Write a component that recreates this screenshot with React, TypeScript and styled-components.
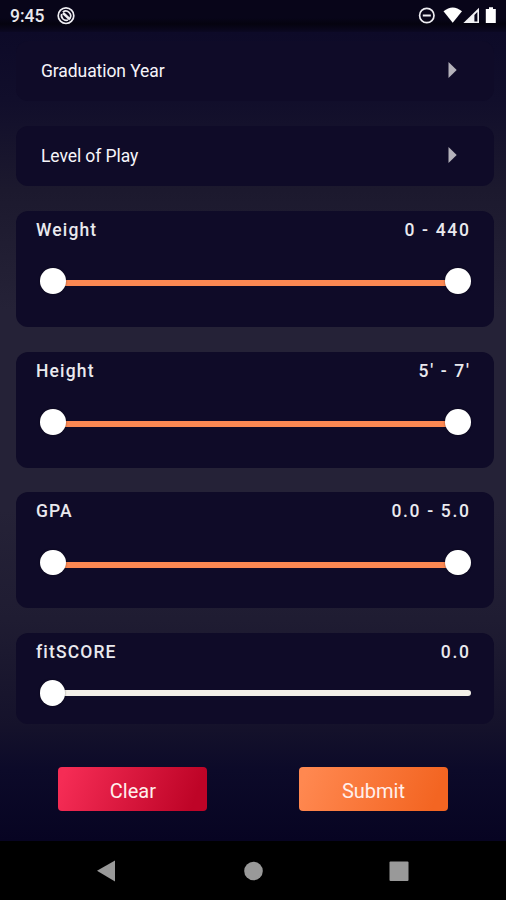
import React from "react";
import styled, { createGlobalStyle } from "styled-components";

const GlobalStyle = createGlobalStyle`
  * { box-sizing: border-box; }
  body { margin: 0; background: #000; font-family: Roboto, "Liberation Sans", sans-serif; }
`;

const Screen = styled.div`
  width: 506px;
  height: 900px;
  display: flex;
  flex-direction: column;
  overflow: hidden;
  color: #eae9ee;
  background: linear-gradient(180deg, #080622 0, #0d0a28 32px, #110e2b 100px, #1c192e 190px, #252237 310px, #252237 510px, #1f1c32 620px, #15122b 725px, #0c0a29 770px, #070422 841px);
`;

const StatusBar = styled.header`
  height: 32px;
  flex: none;
  display: flex;
  align-items: center;
  padding: 0 8px 0 10px;
  background: linear-gradient(180deg, #080519 0, #080519 18px, #05030f 24px, #0b0822 32px);
`;

const Clock = styled.span`
  width: 47px;
  font-size: 17.5px;
  font-weight: 500;
  line-height: 32px;
`;

const StatusIcons = styled.div`
  display: flex;
  margin-left: auto;
`;

const Content = styled.main`
  height: 809px;
  flex: none;
  display: flex;
  flex-direction: column;
  padding: 9px 12px 0 16px;
`;

const SelectRow = styled.button`
  display: flex;
  align-items: center;
  justify-content: space-between;
  flex: none;
  height: 60px;
  margin: 0 0 24.9px;
  padding: 0 37px 0 25px;
  border: 0;
  border-radius: 12px;
  background: #0f0b28;
  color: #f6f5fa;
  font: 400 17.5px/24px Roboto, sans-serif;
  letter-spacing: -0.08px;

  svg {
    margin-bottom: 2px;
  }
`;

const SliderCard = styled.section<{ $compact?: boolean }>`
  flex: none;
  height: ${(p) => (p.$compact ? 91 : 116)}px;
  margin-bottom: ${(p) => (p.$compact ? 0 : 24.75)}px;
  padding: 8px 24px 0 20px;
  border-radius: 12px;
  background: #0f0b28;
`;

const CardHeader = styled.div`
  display: flex;
  justify-content: space-between;
  height: 22px;
  font-size: 17.5px;
  font-weight: 500;
  line-height: 22px;
  letter-spacing: 1.15px;
`;

const Value = styled.span`
  margin-right: -0.5px;
  letter-spacing: 1.65px;
`;

const Slider = styled.div<{ $single?: boolean }>`
  display: flex;
  align-items: center;
  height: 26px;
  margin: ${(p) => (p.$single ? "17px 0 0 3.5px" : "27.3px -0.5px 0 4.2px")};
`;

const Thumb = styled.span`
  position: relative;
  z-index: 1;
  flex: none;
  width: 25.6px;
  height: 25.6px;
  border-radius: 50%;
  background: #fff;
  box-shadow: 0 0 2px #00000080;
`;

const Track = styled.span<{ $single?: boolean }>`
  flex: 1;
  height: 6px;
  margin: ${(p) => (p.$single ? "0 -1px 0 -3px" : "4px -3px 0")};
  border-radius: ${(p) => (p.$single ? "0 3px 3px 0" : 0)};
  background: ${(p) => (p.$single ? "#f3f0e9" : "#fb8853")};
`;

const Actions = styled.div`
  display: flex;
  justify-content: space-between;
  margin: 43.4px 46px 0 42.4px;
`;

const ActionButton = styled.button<{ $from: string; $to: string }>`
  width: 149px;
  height: 44px;
  padding: 3px 0 0;
  border: 0;
  border-radius: 4px;
  color: #fff0ed;
  font: 400 20px/24px Roboto, sans-serif;
  background: linear-gradient(110deg, ${(p) => p.$from} 5%, ${(p) => p.$to} 90%);
`;

const NavigationBar = styled.nav`
  flex: none;
  height: 59px;
  background: #000;
`;

function Arrow() {
  return (
    <svg width="9" height="16" viewBox="0 0 9 16" aria-hidden="true">
      <path d="M.5 0v16L8.7 8z" fill="#b5b3bb" />
    </svg>
  );
}

const ranges = [
  { label: "Weight", value: "0 - 440" },
  { label: "Height", value: "5' - 7'" },
  { label: "GPA", value: "0.0 - 5.0" },
];

export default function App() {
  return (
    <Screen>
      <GlobalStyle />
      <StatusBar>
        <Clock>9:45</Clock>
        <svg width="18" height="18" viewBox="0 0 18 18" fill="none" aria-hidden="true">
          <circle cx="9" cy="8.7" r="7.8" stroke="#eeedf2" strokeWidth="1.7" />
          <path d="M5.8 5.2A4.8 4.8 0 0 1 12.8 11.6M4.7 7A4.8 4.8 0 0 0 11 13" stroke="#eeedf2" strokeWidth="1.7" />
          <path d="m6 6 7 6.5" stroke="#eeedf2" strokeWidth="2.4" />
        </svg>
        <StatusIcons>
          <svg width="80" height="18" viewBox="0 0 80 18" fill="none" aria-hidden="true">
            <circle cx="8.8" cy="8.5" r="7.2" stroke="#eeedf2" strokeWidth="1.7" />
            <path d="M4.8 8.5h8" stroke="#eeedf2" strokeWidth="2" />
            <path d="M25.5 4.3Q34.7-3.5 44 4.3L34.7 15.7z" fill="#fff" />
            <path d="M61 .8V16H45.4z" fill="#f2f2f4" />
            <path d="M59.4 5v9.4h-3V8z" fill="#07051a" />
            <path d="M69.5 2H71V.2h4V2h2.8v14h-10V2z" fill="#fff" />
          </svg>
        </StatusIcons>
      </StatusBar>
      <Content>
        <SelectRow>Graduation Year<Arrow /></SelectRow>
        <SelectRow>Level of Play<Arrow /></SelectRow>
        {ranges.map(({ label, value }) => (
          <SliderCard key={label}>
            <CardHeader><span>{label}</span><Value>{value}</Value></CardHeader>
            <Slider><Thumb /><Track /><Thumb /></Slider>
          </SliderCard>
        ))}
        <SliderCard $compact>
          <CardHeader><span>fitSCORE</span><Value>0.0</Value></CardHeader>
          <Slider $single><Thumb /><Track $single /></Slider>
        </SliderCard>
        <Actions>
          <ActionButton $from="#f52c55" $to="#be0427">Clear</ActionButton>
          <ActionButton $from="#ff8850" $to="#f36522">Submit</ActionButton>
        </Actions>
      </Content>
      <NavigationBar>
        <svg width="506" height="59" viewBox="0 0 506 59" fill="#999" aria-hidden="true">
          <path d="M97 29.8 115 19.5v21z" />
          <circle cx="253.5" cy="30" r="9.3" />
          <rect x="389.5" y="20.5" width="19" height="19.5" rx="1" />
        </svg>
      </NavigationBar>
    </Screen>
  );
}
